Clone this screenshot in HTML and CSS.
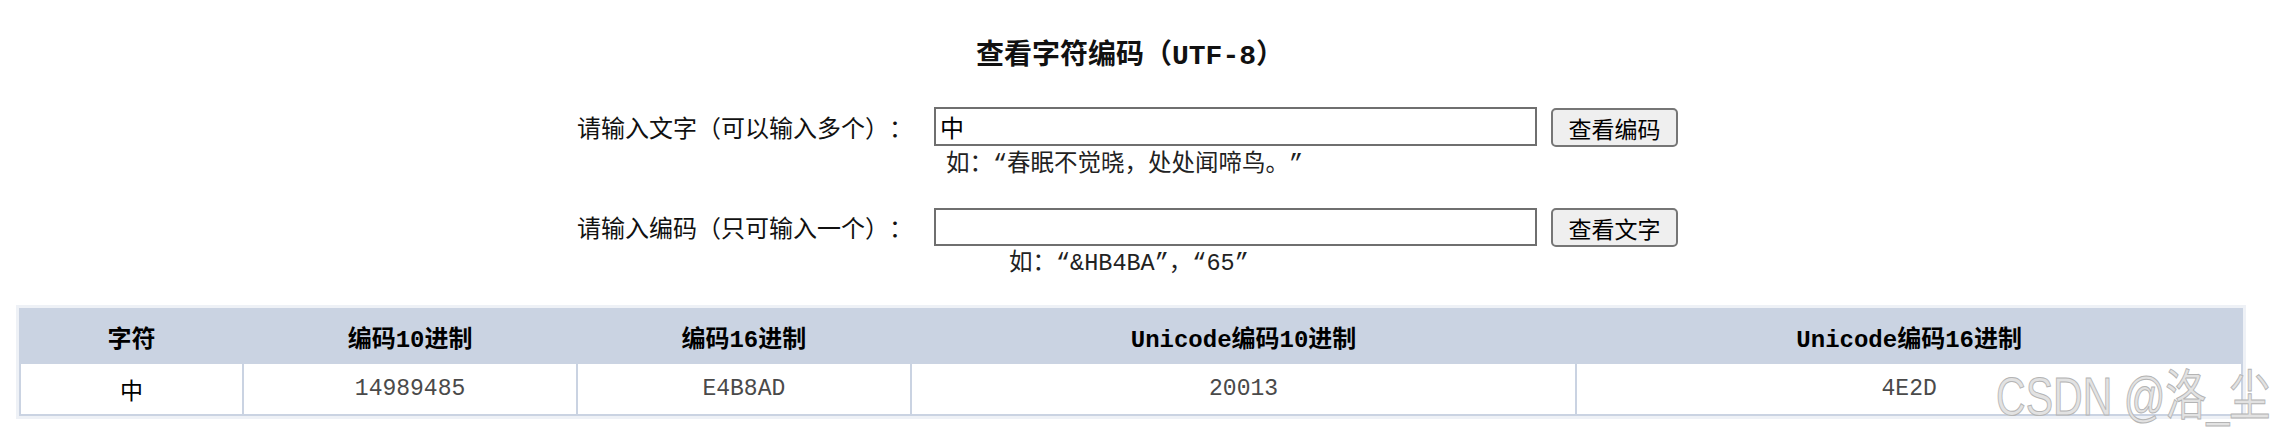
FILE: index.html
```html
<!DOCTYPE html>
<html lang="zh-CN">
<head>
  <meta charset="UTF-8" />
  <meta name="viewport" content="width=device-width, initial-scale=1.0" />
  <title>查看字符编码</title>
  <link rel="stylesheet" href="styles.css">
</head>
<body>
  <h1 class="title">查看字符编码（UTF-8）</h1>

  <div class="form">
    <div class="field">
      <label for="textInput">请输入文字（可以输入多个）：</label>
      <input id="textInput" class="box" value="中" />
      <button class="btn">查看编码</button>
      <p class="hint">如：“春眠不觉晓，处处闻啼鸟。”</p>
    </div>
    <div class="field field-code">
      <label for="codeInput">请输入编码（只可输入一个）：</label>
      <input id="codeInput" class="box" />
      <button class="btn">查看文字</button>
      <p class="hint hint-code">如：“&amp;HB4BA”，“65”</p>
    </div>
  </div>

  <div class="result">
    <table>
      <thead>
        <tr>
          <th class="c1">字符</th>
          <th class="c2">编码10进制</th>
          <th class="c3">编码16进制</th>
          <th class="c4">Unicode编码10进制</th>
          <th class="c5">Unicode编码16进制</th>
        </tr>
      </thead>
      <tbody>
        <tr>
          <td class="char">中</td>
          <td>14989485</td>
          <td>E4B8AD</td>
          <td>20013</td>
          <td>4E2D</td>
        </tr>
      </tbody>
    </table>
  </div>

  <div class="watermark">CSDN @洛_尘</div>
</body>
</html>
```

FILE: styles.css
```css
body {
  margin: 0;
  font-family: "Liberation Mono", "Noto Sans CJK SC", monospace;
  color: #111;
  background: #fff;
  position: relative;
  height: 445px;
  overflow: hidden;
  text-spacing-trim: space-all;
}

.title {
  margin: 42px 0 0;
  padding-right: 16px;
  font-size: 28px;
  line-height: 30px;
  text-align: center;
  font-weight: bold;
}

.form {
  margin-top: 34px;
  display: flex;
  flex-direction: column;
  align-items: center;
  padding-right: 22px;
}

.field {
  display: grid;
  grid-template-columns: 358px 617px 127px;
  align-items: center;
}

.field-code {
  margin-top: 27px;
}

.field label {
  font-family: "Noto Sans CJK SC", sans-serif;
  font-size: 24px;
  text-align: right;
  white-space: nowrap;
  padding-right: 21px;
}

.box {
  box-sizing: border-box;
  width: 603px;
  height: 39px;
  border: 2px solid #6f6f6f;
  padding: 0 4px;
  font-family: "Noto Sans CJK SC", sans-serif;
  font-size: 24px;
  color: #000;
  outline: none;
}

.field-code .box {
  height: 38px;
}

.btn {
  box-sizing: border-box;
  width: 127px;
  height: 39px;
  margin-top: 2px;
  padding: 0;
  font-family: "Noto Sans CJK SC", sans-serif;
  font-size: 23px;
  color: #000;
  background: #efefef;
  border: 2px solid #767676;
  border-radius: 5px;
}

.hint {
  grid-column: 2 / 4;
  margin: 4px 0 0;
  padding-left: 12px;
  font-size: 23.5px;
  line-height: 28px;
  color: #222;
  white-space: nowrap;
}

.hint-code {
  margin-top: 3px;
  padding-left: 75px;
}

.result {
  margin: 27px 30px 0 16px;
  padding: 3px;
  background: #eef1f6;
}

table {
  width: 100%;
  border-collapse: collapse;
  table-layout: fixed;
}

.c1 { width: 10%; }
.c2, .c3 { width: 15%; }
.c4, .c5 { width: 30%; }

th {
  height: 52px;
  padding: 0;
  background: #cad3e2;
  border: 2px solid #cad3e2;
  font-size: 24px;
  font-weight: bold;
  color: #000;
}

td {
  height: 50px;
  padding: 0;
  text-align: center;
  border: 2px solid #cad3e2;
  font-size: 23px;
  color: #4a4a4a;
  background: #fff;
}

td.char {
  font-family: "Noto Sans CJK SC", sans-serif;
  color: #000;
}

.watermark {
  position: absolute;
  left: 1996px;
  top: 366px;
  font-family: "Liberation Sans", "Noto Sans CJK SC", sans-serif;
  font-size: 54px;
  line-height: 60px;
  white-space: nowrap;
  color: #e2e2e2;
  -webkit-text-stroke: 1px #b4b4b4;
  transform: scaleX(0.76);
  transform-origin: left top;
}
```
